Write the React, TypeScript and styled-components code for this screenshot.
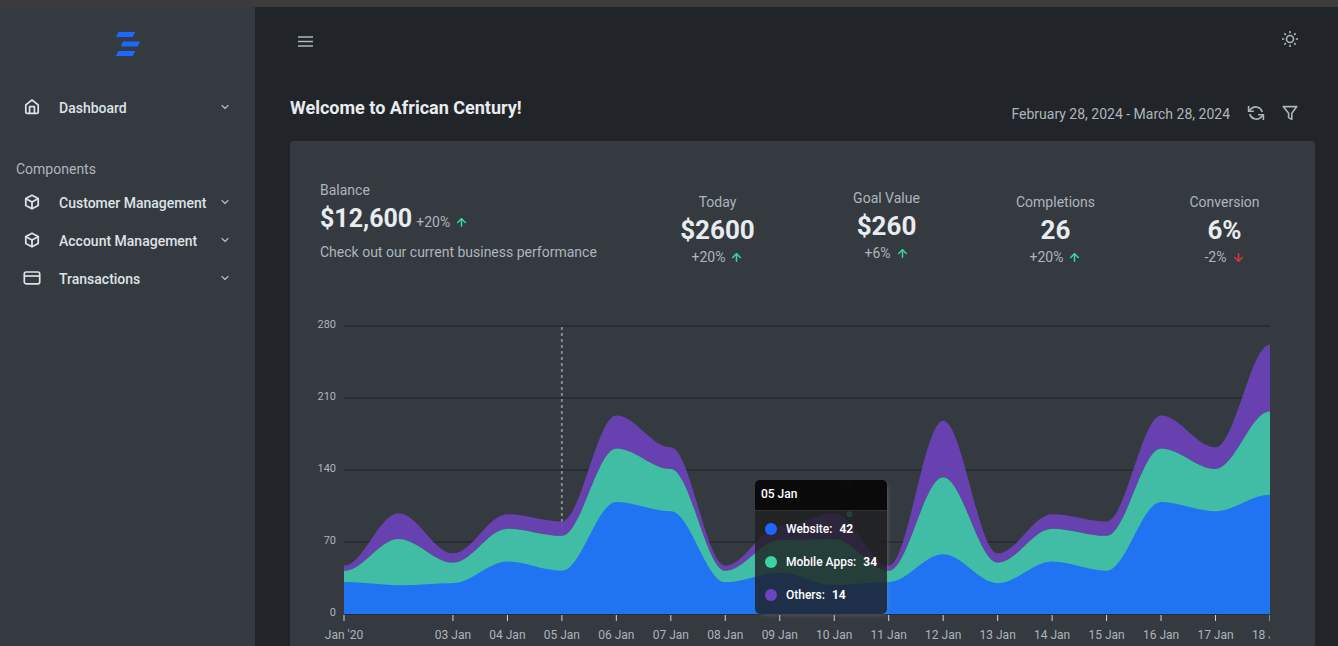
import React, { useEffect, useRef, useState } from "react";
import styled, { createGlobalStyle } from "styled-components";
import { ChevronDown, ArrowUp, ArrowDown } from "lucide-react";

const GlobalStyle = createGlobalStyle`
  *, *::before, *::after { box-sizing: border-box; }
  html, body, #root { height: 100%; }
  body {
    margin: 0;
    background: #212529;
    color: #adb5bd;
    font: 400 14px/20px Roboto, "Liberation Sans", sans-serif;
    overflow: hidden;
  }
  button { font: inherit; color: inherit; background: none; border: 0; padding: 0; cursor: pointer; }
  h1, p, ul { margin: 0; padding: 0; }
  svg { display: block; }
`;

const Page = styled.div`
  height: 100%;
  display: flex;
  border-top: 7px solid #3c3c3c;
`;

const Sidebar = styled.aside`
  flex: 0 0 255px;
  background: #343a40;
  padding: 24px 16px;
`;

const Logo = styled.a`
  display: flex;
  justify-content: center;
  margin-bottom: 31px;
`;

const NavList = styled.ul`
  list-style: none;
`;

const NavButton = styled.button`
  width: 100%;
  height: 38px;
  display: flex;
  align-items: center;
  padding: 0 8px 0 6px;
  color: #dee2e6;
  font-weight: 500;
  text-align: left;
`;

const NavIcon = styled.span`
  width: 20px;
  margin-right: 17px;
  display: flex;
  justify-content: center;
`;

const NavText = styled.span`
  flex: 1;
  padding-top: 2px;
`;

const NavHeading = styled.p`
  margin: 33px 0 4px;
`;

const Main = styled.main`
  flex: 1;
  min-width: 0;
  padding: 22px 23px 0 35px;
`;

const Topbar = styled.header`
  display: flex;
  justify-content: space-between;
  align-items: center;
  padding: 0 16px 0 6px;
  height: 20px;
`;

const IconButton = styled.button`
  display: flex;
  color: #adb5bd;
`;

const TitleRow = styled.div`
  display: flex;
  justify-content: space-between;
  align-items: center;
  margin-top: 47px;
  height: 24px;
`;

const Title = styled.h1`
  color: #e9ecef;
  font-size: 18px;
  line-height: 24px;
  font-weight: 700;
`;

const Tools = styled.div`
  display: flex;
  align-items: center;
  gap: 17px;
  padding: 9px 17px 0 0;
`;

const DateRange = styled.span`
  padding-top: 2px;
`;

const Card = styled.section`
  margin-top: 21px;
  border-radius: 4px;
  background: #343a40;
  padding: 39px 6px 24px 30px;
`;

const Stats = styled.div`
  display: flex;
`;

const Balance = styled.div`
  flex: 0 0 313px;
`;

const Muted = styled.p`
  line-height: 20px;
`;

const BalanceRow = styled.div`
  display: flex;
  align-items: baseline;
  gap: 4px;
  height: 36px;
  margin-bottom: 6px;
`;

const Figure = styled.p<{ $compact?: boolean }>`
  color: #e9ecef;
  font-size: ${(p) => (p.$compact ? 25 : 26)}px;
  line-height: 37px;
  font-weight: 700;
`;

const Change = styled.p<{ $down?: boolean }>`
  display: flex;
  align-items: center;
  gap: 5px;
  line-height: 16px;
  svg { color: ${(p) => (p.$down ? "#dc3545" : "#3cd6a0")}; }
`;

const Metrics = styled.div`
  flex: 1;
  display: grid;
  grid-template-columns: repeat(4, 1fr);
`;

const Metric = styled.div<{ $raised?: boolean }>`
  display: flex;
  flex-direction: column;
  align-items: center;
  padding-top: ${(p) => (p.$raised ? 8 : 12)}px;
`;

const ChartArea = styled.div`
  position: relative;
  margin: 48px 39px 0 -6px;
`;

const Tooltip = styled.div`
  position: absolute;
  left: 50%;
  top: 167px;
  margin-left: -37px;
  width: 132px;
  height: 134px;
  border-radius: 5px;
  overflow: hidden;
  background: rgba(30, 30, 30, 0.8);
  box-shadow: 2px 2px 6px -4px #999;
  color: #fff;
  font-size: 12px;
  font-weight: 500;
`;

const TooltipTitle = styled.div`
  height: 31px;
  line-height: 28px;
  padding-left: 6px;
  background: rgba(0, 0, 0, 0.7);
  border-bottom: 1px solid #333;
`;

const TooltipRow = styled.div`
  height: 33px;
  display: flex;
  align-items: center;
  padding: 2px 0 0 10px;
`;

const Dot = styled.span<{ $color: string }>`
  width: 12px;
  height: 12px;
  border-radius: 50%;
  margin-right: 9px;
  background: ${(p) => p.$color};
`;

const TooltipValue = styled.b`
  margin-left: 7px;
`;

const HomeIcon = () => (
  <svg width="16" height="16" viewBox="0 0 16 16" fill="none" stroke="currentColor" strokeWidth="1.7" strokeLinejoin="round">
    <path d="M1.8 5.8 8 1l6.200 4.800v7.400a1.200 1.200 0 0 1-1.200 1.200H3a1.200 1.200 0 0 1-1.200-1.200z" />
    <path d="M5.600 14.400V7.600h4.800v6.800" />
  </svg>
);

const BoxIcon = () => (
  <svg width="16" height="16" viewBox="0 0 16 16" fill="none" stroke="currentColor" strokeWidth="1.8" strokeLinejoin="round">
    <path d="M8 1.200 14.200 4.500v7L8 14.800 1.800 11.500v-7z" />
    <path d="M2 4.700 8 8l6-3.300M8 8v6.600" />
  </svg>
);

const CardIcon = () => (
  <svg width="18" height="16" viewBox="0 0 18 16" fill="none" stroke="currentColor" strokeWidth="1.7">
    <rect x="1.300" y="2" width="15.400" height="11.800" rx="1.800" />
    <path d="M1.300 6h15.400" />
  </svg>
);

const SunIcon = () => (
  <svg width="18" height="18" viewBox="0 0 18 18" fill="none" stroke="currentColor" strokeWidth="1.600">
    <circle cx="9" cy="9" r="3.500" />
    <path d="M9 1v2.200M9 14.800V17M1 9h2.200M14.800 9H17M3.340 3.340l1.500 1.500M13.160 13.160l1.500 1.500M3.340 14.660l1.500-1.500M13.160 4.840l1.500-1.500" />
  </svg>
);

const RefreshIcon = () => (
  <svg width="18" height="16" viewBox="0 0 18 16" fill="none" stroke="currentColor" strokeWidth="1.600">
    <path d="M1.600 1v5.200h5.200M16.400 15V9.800h-5.200" />
    <path d="M1.600 6.200 4.200 3.700A6.600 6.600 0 0 1 15.200 7M16.400 9.800l-2.600 2.500A6.600 6.600 0 0 1 2.800 9" />
  </svg>
);

const FilterIcon = () => (
  <svg width="16" height="16" viewBox="0 0 16 16" fill="none" stroke="currentColor" strokeWidth="1.600" strokeLinejoin="round">
    <path d="M1.200 1.600h13.600L9.800 8.200v6.200l-3.200-1.800V8.200z" />
  </svg>
);

const NavItem = ({ icon, label }: { icon: React.ReactNode; label: string }) => (
  <li>
    <NavButton type="button">
      <NavIcon>{icon}</NavIcon>
      <NavText>{label}</NavText>
      <ChevronDown size={12} strokeWidth={2.5} color="#adb5bd" />
    </NavButton>
  </li>
);

const Trend = ({ value, down }: { value: string; down?: boolean }) => (
  <Change $down={down}>
    {value}
    {down ? <ArrowDown size={13} strokeWidth={2.8} /> : <ArrowUp size={13} strokeWidth={2.8} />}
  </Change>
);

const website = [31, 28, 30, 51, 42, 109, 100, 31, 40, 28, 31, 58, 30, 51, 42, 109, 100, 116];
const mobile = [11, 45, 20, 32, 34, 52, 41, 11, 32, 45, 11, 75, 20, 32, 34, 52, 41, 81];
const others = [5, 25, 9, 14, 14, 32, 21, 5, 13, 25, 5, 55, 9, 14, 14, 32, 21, 65];

const markers = [
  { value: 126, color: "#6f42c1" },
  { value: 97, color: "#3ad29f" },
  { value: 52, color: "#1b68ff" },
];

const TOP = 13;
const BASE = 301;
const LEFT = 30;
const MAX = 280;

const yOf = (v: number) => BASE - (v / MAX) * (BASE - TOP);

const areaPath = (upper: number[], lower: number[], step: number) => {
  const n = upper.length;
  const bend = step * 0.35;
  let d = `M${LEFT},${yOf(upper[0])}`;
  for (let i = 1; i < n; i++) {
    const x0 = LEFT + (i - 1) * step;
    const x1 = LEFT + i * step;
    d += `C${x0 + bend},${yOf(upper[i - 1])} ${x1 - bend},${yOf(upper[i])} ${x1},${yOf(upper[i])}`;
  }
  d += `L${LEFT + (n - 1) * step},${yOf(lower[n - 1])}`;
  for (let i = n - 1; i > 0; i--) {
    const x0 = LEFT + i * step;
    const x1 = LEFT + (i - 1) * step;
    d += `C${x0 - bend},${yOf(lower[i])} ${x1 + bend},${yOf(lower[i - 1])} ${x1},${yOf(lower[i - 1])}`;
  }
  return d + "Z";
};

const AreaChart = () => {
  const ref = useRef<HTMLDivElement>(null);
  const [width, setWidth] = useState(956);
  useEffect(() => {
    const node = ref.current;
    if (!node) return;
    const observer = new ResizeObserver(([entry]) => setWidth(entry.contentRect.width));
    observer.observe(node);
    return () => observer.disconnect();
  }, []);

  const step = (width - LEFT) / (website.length - 1);
  const zero = website.map(() => 0);
  const middle = website.map((v, i) => v + mobile[i]);
  const top = middle.map((v, i) => v + others[i]);

  return (
    <ChartArea ref={ref}>
      <svg width={width} height="340" role="img" aria-label="Daily visits by source">
        {[0, 70, 140, 210, 280].map((v) => (
          <g key={v}>
            <line x1={LEFT} x2={width} y1={yOf(v)} y2={yOf(v)} stroke="#292e32" strokeWidth="2" />
            <text x="22" y={yOf(v) + 2} textAnchor="end" fontSize="11" fill="#adb5bd">{v}</text>
          </g>
        ))}
        <line x1={LEFT + 4 * step} x2={LEFT + 4 * step} y1={TOP + 1} y2={BASE} stroke="#85898d" strokeWidth="2" strokeDasharray="3 3" />
        <path d={areaPath(top, middle, step)} fill="#6a42b6" fillOpacity="0.94" />
        <path d={areaPath(middle, zero, step)} fill="#42bda5" />
        <path d={areaPath(website, zero, step)} fill="#2074f2" />
        {markers.map((m) => (
          <circle key={m.color} cx={LEFT + 9.280 * step} cy={yOf(m.value)} r="3" fill={m.color} />
        ))}
        {website.map((_, i) => {
          if (i === 1) return null;
          const x = LEFT + i * step;
          const label = i === 0 ? "Jan '20" : `${String(i + 1).padStart(2, "0")} Jan`;
          return (
            <g key={i}>
              <line x1={x} x2={x} y1={BASE + 1} y2={BASE + 7} stroke="#ced4da" />
              <text x={x} y={BASE + 25} textAnchor="middle" fontSize="12" fill="#adb5bd">{label}</text>
            </g>
          );
        })}
      </svg>
      <Tooltip role="tooltip">
        <TooltipTitle>05 Jan</TooltipTitle>
        <TooltipRow><Dot $color="#1b68ff" />Website:<TooltipValue>42</TooltipValue></TooltipRow>
        <TooltipRow><Dot $color="#3ad29f" />Mobile Apps:<TooltipValue>34</TooltipValue></TooltipRow>
        <TooltipRow><Dot $color="#6f42c1" />Others:<TooltipValue>14</TooltipValue></TooltipRow>
      </Tooltip>
    </ChartArea>
  );
};

const metrics = [
  { label: "Today", value: "$2600", change: "+20%" },
  { label: "Goal Value", value: "$260", change: "+6%", raised: true },
  { label: "Completions", value: "26", change: "+20%" },
  { label: "Conversion", value: "6%", change: "-2%", down: true },
];

export default function App() {
  return (
    <Page>
      <GlobalStyle />
      <Sidebar>
        <Logo href="#" aria-label="Home">
          <svg width="24" height="26" viewBox="0 0 24 26" fill="#1b68ff">
            <path d="M2.300 1h16.900l-2.300 5H0zM7 10.500h17l-2.300 5H4.700zM2.300 20h16.900l-2.300 5H0z" />
          </svg>
        </Logo>
        <nav>
          <NavList>
            <NavItem icon={<HomeIcon />} label="Dashboard" />
          </NavList>
          <NavHeading>Components</NavHeading>
          <NavList>
            <NavItem icon={<BoxIcon />} label="Customer Management" />
            <NavItem icon={<BoxIcon />} label="Account Management" />
            <NavItem icon={<CardIcon />} label="Transactions" />
          </NavList>
        </nav>
      </Sidebar>
      <Main>
        <Topbar>
          <IconButton type="button" aria-label="Toggle menu">
            <svg width="18" height="18" viewBox="0 0 18 18" stroke="currentColor" strokeWidth="1.600">
              <path d="M2 7h15M2 11.500h15M2 16h15" />
            </svg>
          </IconButton>
          <IconButton type="button" aria-label="Switch theme"><SunIcon /></IconButton>
        </Topbar>
        <TitleRow>
          <Title>Welcome to African Century!</Title>
          <Tools>
            <DateRange>February 28, 2024 - March 28, 2024</DateRange>
            <IconButton type="button" aria-label="Refresh"><RefreshIcon /></IconButton>
            <IconButton type="button" aria-label="Filter"><FilterIcon /></IconButton>
          </Tools>
        </TitleRow>
        <Card>
          <Stats>
            <Balance>
              <Muted>Balance</Muted>
              <BalanceRow>
                <Figure $compact>$12,600</Figure>
                <Trend value="+20%" />
              </BalanceRow>
              <Muted>Check out our current business performance</Muted>
            </Balance>
            <Metrics>
              {metrics.map((m) => (
                <Metric key={m.label} $raised={m.raised}>
                  <Muted>{m.label}</Muted>
                  <Figure>{m.value}</Figure>
                  <Trend value={m.change} down={m.down} />
                </Metric>
              ))}
            </Metrics>
          </Stats>
          <AreaChart />
        </Card>
      </Main>
    </Page>
  );
}
